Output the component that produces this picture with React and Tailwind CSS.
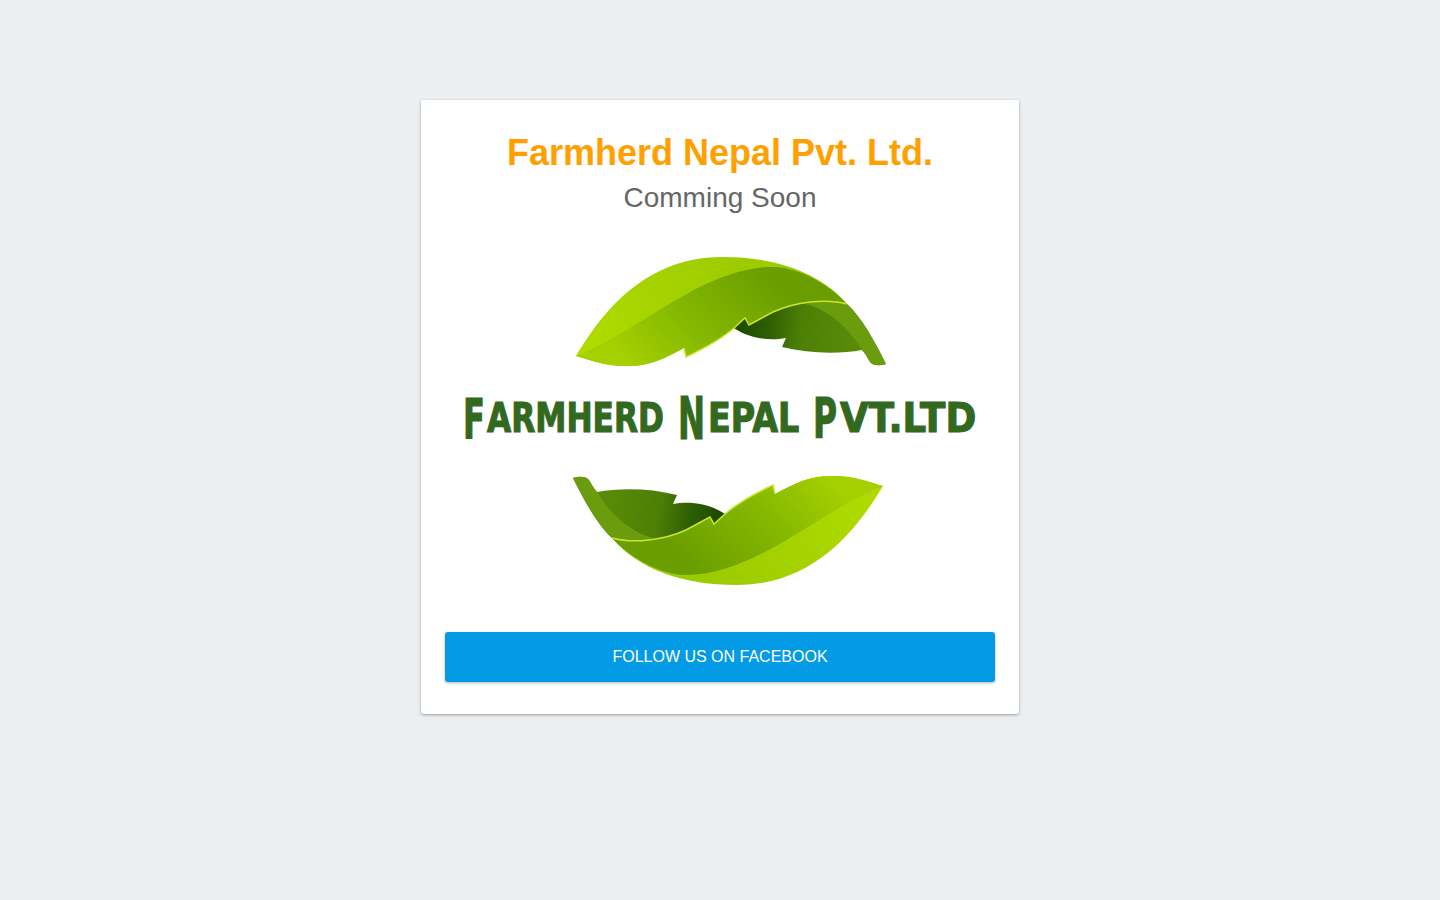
function Leaf({ transform }) {
  return (
    <g transform={transform}>
      {/* back of the leaf, seen under the fold */}
      <path
        d="M734 328 L745 318 L749 325 L773 312 C795 302 825 298 847 304 C862 318 874 340 886 364 C880 366 873 366 870 362 C867 357 865 353 862 350 C840 354 810 354 782 347 L786 338 C770 341 750 339 734 328Z"
        fill="url(#backLeaf)"
      />
      <path
        d="M806 304 C830 310 850 330 862 350 C865 353 867 357 870 362 C873 366 880 366 886 364 C874 340 862 318 847 304 C830 298 815 300 806 304Z"
        fill="#6b9c0e"
      />
      {/* front of the leaf */}
      <path
        d="M576 356 C598 320 640 257 722 257 C775 257 820 272 847 304 C825 298 795 302 773 312 L749 325 L745 318 L734 328 C720 340 705 348 686 357 L684 348 C665 358 650 367 625 366 C605 366 590 360 576 356Z"
        fill="url(#lightLeaf)"
      />
      <path
        d="M576 356 C612 342 650 314 690 292 C720 276 750 266 775 267 C800 268 830 285 847 304 C825 298 795 302 773 312 L749 325 L745 318 L734 328 C720 340 705 348 686 357 L684 348 C665 358 650 367 625 366 C605 366 590 360 576 356Z"
        fill="url(#midLeaf)"
      />
      <path
        d="M847 304 C825 298 795 302 773 312 L749 325 L745 318 L734 328 C720 340 705 348 686 357 L684 348"
        fill="none"
        stroke="#cbe62a"
        strokeWidth="1.5"
      />
    </g>
  );
}

// logo lettering: big initial + small caps, squeezed to the widths in the logo
function LogoWord({ x, y, size, sx, children }) {
  return (
    <text
      transform={`translate(${x} ${y}) scale(${sx} 1)`}
      fontSize={size}
      fill="#33691e"
      stroke="#33691e"
      strokeWidth="1.2"
      fontWeight="700"
      className="font-['DejaVu_Sans',sans-serif]"
    >
      {children}
    </text>
  );
}

function Logo() {
  return (
    <svg viewBox="445 240 550 370" className="w-[550px] h-[370px] block mt-[24px] mb-[22px]">
      <defs>
        <linearGradient id="backLeaf" gradientUnits="userSpaceOnUse" x1="740" y1="325" x2="860" y2="340">
          <stop offset="0" stopColor="#1c4a00" />
          <stop offset="0.25" stopColor="#2f6003" />
          <stop offset="0.5" stopColor="#4d7f06" />
          <stop offset="1" stopColor="#5b8c08" />
        </linearGradient>
        <linearGradient id="lightLeaf" gradientUnits="userSpaceOnUse" x1="590" y1="350" x2="740" y2="260">
          <stop offset="0" stopColor="#b0db00" />
          <stop offset="1" stopColor="#9ccb00" />
        </linearGradient>
        <linearGradient id="midLeaf" gradientUnits="userSpaceOnUse" x1="640" y1="375" x2="760" y2="265">
          <stop offset="0" stopColor="#a4d000" />
          <stop offset="0.45" stopColor="#84b800" />
          <stop offset="1" stopColor="#6a9e00" />
        </linearGradient>
      </defs>
      <Leaf />
      <Leaf transform="rotate(180 729.5 421)" />
      <LogoWord x={463} y={438} size={55} sx={0.585}>F</LogoWord>
      <LogoWord x={487} y={432} size={41} sx={0.763}>ARMHERD</LogoWord>
      <LogoWord x={678} y={439} size={58} sx={0.557}>N</LogoWord>
      <LogoWord x={708} y={432} size={41} sx={0.813}>EPAL</LogoWord>
      <LogoWord x={813} y={437} size={55} sx={0.597}>P</LogoWord>
      <LogoWord x={840} y={432} size={41} sx={0.906}>VT.LTD</LogoWord>
    </svg>
  );
}

export default function App() {
  return (
    <div className="min-h-screen bg-[#eceff1] pt-[100px] font-['Liberation_Sans',Arial,sans-serif]">
      <div className="w-[598px] mx-auto bg-white rounded-[3px] px-6 pt-[33px] pb-8 shadow-[0_1px_3px_rgba(0,0,0,0.35)] text-center">
        <h1 className="text-[36px] leading-[40px] font-bold text-[#ffa000]">Farmherd Nepal Pvt. Ltd.</h1>
        <h2 className="text-[28px] leading-[36px] mt-[7px] text-[#666666]">Comming Soon</h2>
        <Logo />
        <button className="w-full h-[50px] rounded-[3px] bg-[#039be5] text-white text-base shadow-[0_1px_3px_rgba(0,0,0,0.3)]">
          FOLLOW US ON FACEBOOK
        </button>
      </div>
    </div>
  );
}
